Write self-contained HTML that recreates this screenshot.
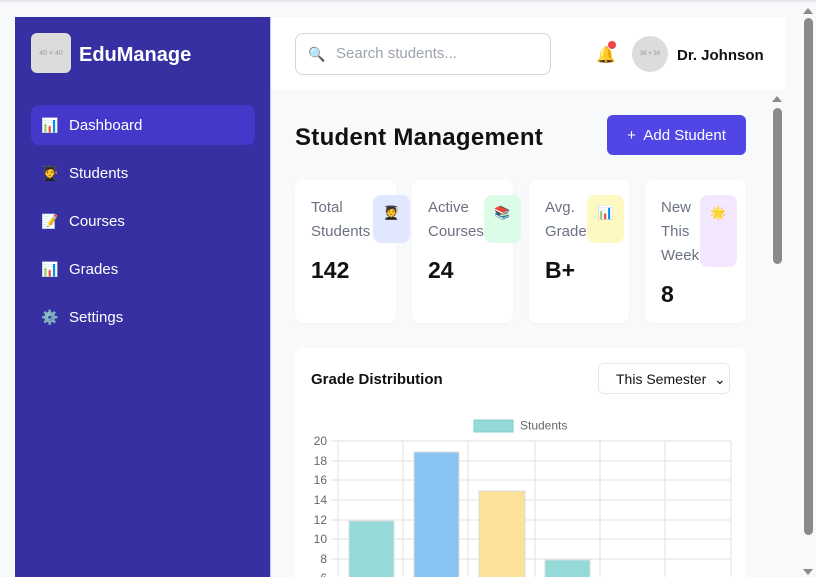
<!DOCTYPE html>
<html><head><meta charset="utf-8"><style>
*{box-sizing:border-box;margin:0;padding:0}
html,body{width:816px;height:577px;overflow:hidden}
body{background:#f8f9fb;font-family:"Liberation Sans","Noto Sans CJK SC",sans-serif;position:relative}
.topline{position:absolute;left:0;top:0;width:816px;height:2px;background:#e5e7eb}
.side{position:absolute;left:15px;top:17px;width:256px;height:560px;background:#3730a3;border-right:1px solid #c7c4f0}
.logo{position:absolute;left:16px;top:16px;width:40px;height:40px;border-radius:6px;background:#dcdcdc;color:#9a9a9a;font-size:7px;display:flex;align-items:center;justify-content:center}
.brand{position:absolute;left:64px;top:27px;color:#fff;font-weight:bold;font-size:20px}
.nav{position:absolute;left:16px;width:224px;height:40px;border-radius:8px;color:#fff;font-size:15px;display:flex;align-items:center;padding-left:10px;padding-top:1px}
.nav.act{background:#4338ca}
.nav i{font-style:normal;width:28px;font-size:14px}
.header{position:absolute;left:271px;top:17px;width:514px;height:73px;background:#fff}
.search{position:absolute;left:24px;top:16px;width:256px;height:42px;border:1px solid #d1d5db;border-radius:8px;color:#9ca3af;font-size:15px;padding:11px 0 0 40px}
.search i{position:absolute;left:12px;top:12px;font-style:normal;font-size:14px}
.bell{position:absolute;left:325px;top:28px;font-size:16px}
.dot{position:absolute;left:337px;top:24px;width:8px;height:8px;border-radius:50%;background:#ef4444}
.av{position:absolute;left:361px;top:19px;width:36px;height:36px;border-radius:50%;background:#dcdcdc;color:#9a9a9a;font-size:6px;display:flex;align-items:center;justify-content:center}
.name{position:absolute;left:406px;top:30px;font-size:15px;font-weight:bold;color:#111}
h1{position:absolute;left:295px;top:124px;font-size:24px;letter-spacing:0.3px;color:#111}
.btn{position:absolute;left:607px;top:115px;width:139px;height:40px;background:#4f46e5;border-radius:6px;color:#fff;font-size:15px;display:flex;align-items:center;justify-content:center;padding-top:1px}
.card{position:absolute;top:180px;height:143px;background:#fff;border-radius:8px;box-shadow:0 1px 2px rgba(0,0,0,.04)}
.card .l{position:absolute;left:16px;top:16px;color:#6b7280;font-size:15px;line-height:24px}
.card .v{position:absolute;left:16px;font-size:23px;font-weight:bold;color:#111}
.card .ic{position:absolute;top:15px;width:37px;border-radius:8px;display:flex;justify-content:center;padding-top:10px;font-size:13px}
.chart{position:absolute;left:295px;top:348px;width:451px;height:229px;background:#fff;border-radius:8px 8px 0 0}
.chart .t{position:absolute;left:16px;top:23px;font-size:15px;font-weight:bold;color:#111}
.sel{position:absolute;left:303px;top:15px;width:132px;height:31px;border:1px solid #e5e7eb;border-radius:6px;font-size:14px;color:#111;padding:7px 0 0 17px}
.sb{position:absolute;background:#8a8a8a;border-radius:5px}
.tri{position:absolute;width:0;height:0;border-left:5px solid transparent;border-right:5px solid transparent}
</style></head><body>
<div class="topline"></div>
<div class="side">
<div class="logo">40 × 40</div>
<div class="brand">EduManage</div>
<div class="nav act" style="top:88px"><i>📊</i>Dashboard</div>
<div class="nav" style="top:136px"><i>🧑‍🎓</i>Students</div>
<div class="nav" style="top:184px"><i>📝</i>Courses</div>
<div class="nav" style="top:232px"><i>📊</i>Grades</div>
<div class="nav" style="top:280px"><i>⚙️</i>Settings</div>
</div>
<div class="header">
<div class="search"><i>🔍</i>Search students...</div>
<div class="bell">🔔</div><div class="dot"></div>
<div class="av">36 × 36</div>
<div class="name">Dr. Johnson</div>
</div>
<h1>Student Management</h1>
<div class="btn">+&nbsp; Add Student</div>
<div class="card" style="left:295px;width:101px"><div class="l">Total<br>Students</div><div class="v" style="top:77px">142</div><div class="ic" style="left:78px;height:48px;background:#e0e7ff">🧑‍🎓</div></div>
<div class="card" style="left:412px;width:101px"><div class="l">Active<br>Courses</div><div class="v" style="top:77px">24</div><div class="ic" style="left:72px;height:48px;background:#dcfce7">📚</div></div>
<div class="card" style="left:529px;width:100px"><div class="l">Avg.<br>Grade</div><div class="v" style="top:77px">B+</div><div class="ic" style="left:58px;height:48px;background:#fef9c3">📊</div></div>
<div class="card" style="left:645px;width:101px"><div class="l">New<br>This<br>Week</div><div class="v" style="top:101px">8</div><div class="ic" style="left:55px;height:72px;background:#f3e8ff">🌟</div></div>
<div class="chart">
<div class="t">Grade Distribution</div>
<div class="sel">This Semester &nbsp;⌄</div>
</div>
<svg style="position:absolute;left:0;top:0" width="816" height="577" font-family="Liberation Sans" font-size="12" fill="#666">
<rect x="474" y="420" width="39" height="12" fill="#96d9d9" stroke="#7fcfcf"/>
<text x="520" y="429.5">Students</text>
<g stroke="#e2e2e2">
<line x1="331" y1="441" x2="731" y2="441"/><line x1="331" y1="461" x2="731" y2="461"/><line x1="331" y1="480" x2="731" y2="480"/><line x1="331" y1="500" x2="731" y2="500"/><line x1="331" y1="520" x2="731" y2="520"/><line x1="331" y1="539" x2="731" y2="539"/><line x1="331" y1="559" x2="731" y2="559"/>
<line x1="338" y1="441" x2="338" y2="577"/><line x1="403" y1="441" x2="403" y2="577"/><line x1="468" y1="441" x2="468" y2="577"/><line x1="535" y1="441" x2="535" y2="577"/><line x1="600" y1="441" x2="600" y2="577"/><line x1="665" y1="441" x2="665" y2="577"/><line x1="731" y1="441" x2="731" y2="577"/>
</g>
<g text-anchor="end"><text x="327" y="445">20</text><text x="327" y="465">18</text><text x="327" y="484">16</text><text x="327" y="504">14</text><text x="327" y="524">12</text><text x="327" y="543">10</text><text x="327" y="563">8</text><text x="327" y="582">6</text></g>
<rect x="349" y="521" width="45" height="60" fill="#96d9d9" stroke="#ddd"/>
<rect x="414" y="452" width="45" height="130" fill="#89c4f2" stroke="#ddd"/>
<rect x="479" y="491" width="46" height="90" fill="#fde09a" stroke="#ddd"/>
<rect x="545" y="560" width="45" height="30" fill="#96d9d9" stroke="#ddd"/>
</svg>
<div class="tri" style="left:772px;top:96px;border-bottom:6px solid #8a8a8a"></div>
<div class="sb" style="left:773px;top:108px;width:9px;height:156px"></div>
<div class="tri" style="left:803px;top:8px;border-bottom:6px solid #8a8a8a"></div>
<div class="sb" style="left:804px;top:18px;width:9px;height:517px"></div>
<div class="tri" style="left:803px;top:569px;border-top:6px solid #8a8a8a"></div>
</body></html>
